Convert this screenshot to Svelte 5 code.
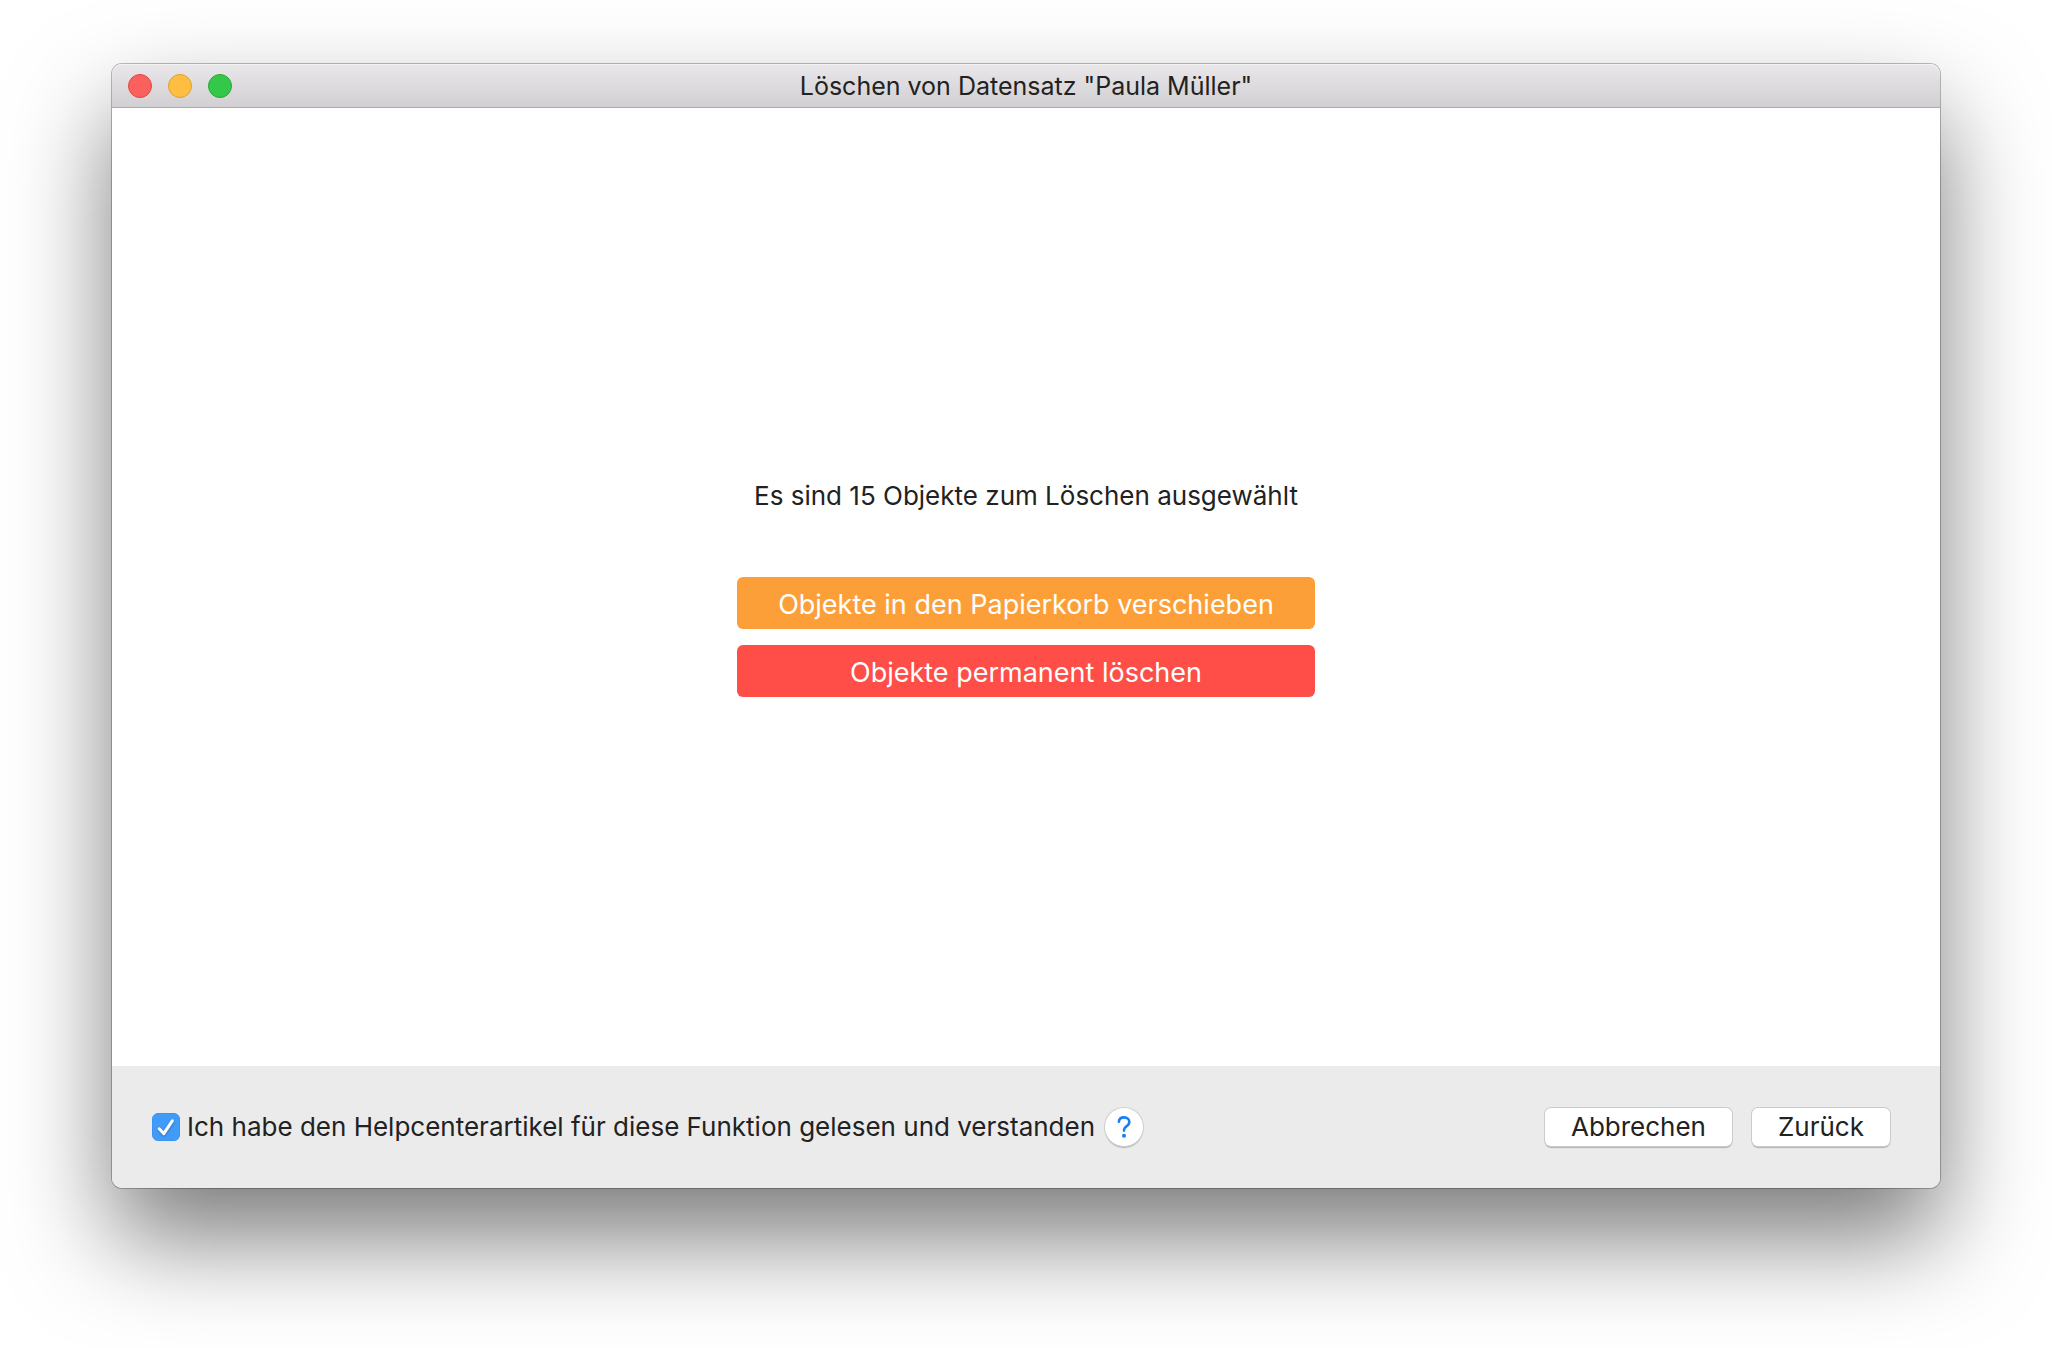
<script>
  let read = $state(true);

  const actions = [
    { label: 'Objekte in den Papierkorb verschieben', kind: 'trash' },
    { label: 'Objekte permanent löschen', kind: 'remove' }
  ];
</script>

<div class="desktop">
  <main class="window">
    <header>
      <div class="lights">
        <button class="light close" aria-label="Schließen"></button>
        <button class="light minimize" aria-label="Minimieren"></button>
        <button class="light zoom" aria-label="Vergrößern"></button>
      </div>
      <h1>Löschen von Datensatz "Paula Müller"</h1>
    </header>

    <section class="content">
      <p>Es sind 15 Objekte zum Löschen ausgewählt</p>
      <div class="actions">
        {#each actions as action}
          <button class="action {action.kind}">{action.label}</button>
        {/each}
      </div>
    </section>

    <footer>
      <label>
        <span class="check">
          <input type="checkbox" bind:checked={read}>
          {#if read}
            <svg width="28" height="28" viewBox="0 0 28 28" fill="none" aria-hidden="true">
              <path d="M7.2 15.8L11.8 20.6L20.3 7.8" stroke="white" stroke-width="3" stroke-linecap="round" stroke-linejoin="round"/>
            </svg>
          {/if}
        </span>
        Ich habe den Helpcenterartikel für diese Funktion gelesen und verstanden
      </label>
      <button class="help" aria-label="Hilfe">
        <svg width="38" height="38" viewBox="0 0 38 38" fill="none" aria-hidden="true">
          <path d="M13.9 13.8C14 11.1 16 9.4 19.1 9.4C22.2 9.4 24.3 11.2 24.3 13.9C24.3 15.9 23.2 17.2 21.4 18.3C19.7 19.4 19 20.3 19 21.8V22.6" stroke="#157efb" stroke-width="2.6" stroke-linecap="round"/>
          <circle cx="19" cy="27.8" r="2" fill="#157efb"/>
        </svg>
      </button>
      <div class="nav">
        <button class="push">Abbrechen</button>
        <button class="push">Zurück</button>
      </div>
    </footer>
  </main>
</div>

<style>
  :global(body){
    margin: 0;
    background: white;
  }
  .desktop{
    box-sizing: border-box;
    display: flex;
    min-height: 100vh;
    padding: 64px 112px 160px;
    overflow: hidden;
    font-family: Inter, "Liberation Sans", sans-serif;
    font-size: 26px;
    line-height: 30px;
    color: #222;
  }
  button{
    padding: 0;
    border: 0;
    font: inherit;
    color: inherit;
  }
  .window{
    flex: 1;
    display: flex;
    flex-direction: column;
    border-radius: 10px;
    background: white;
    box-shadow: 0 0 0 1px rgba(0,0,0,.26), 0 50px 100px rgba(0,0,0,.52);
  }

  header{
    box-sizing: border-box;
    height: 44px;
    display: grid;
    grid-template-columns: 1fr auto 1fr;
    align-items: center;
    padding: 0 16px;
    border-bottom: 1px solid #aeabae;
    border-radius: 10px 10px 0 0;
    background: linear-gradient(#e9e7ea, #d1cfd2);
    box-shadow: inset 0 1px 0 #f5f4f5;
  }
  .lights{
    display: flex;
    gap: 16px;
  }
  .light{
    width: 24px;
    height: 24px;
    border: 1px solid;
    border-radius: 50%;
  }
  .close{
    background: #fc605c;
    border-color: #df4744;
  }
  .minimize{
    background: #fdbe41;
    border-color: #de9f34;
  }
  .zoom{
    background: #34c84a;
    border-color: #27a934;
  }
  h1{
    margin: 0;
    font-size: 25px;
    font-weight: 400;
  }

  .content{
    flex: 1;
    display: flex;
    flex-direction: column;
    align-items: center;
    justify-content: center;
    gap: 66px;
    padding-top: 4px;
  }
  p{
    margin: 0;
  }
  .actions{
    display: flex;
    flex-direction: column;
    gap: 16px;
    width: 578px;
  }
  .action{
    height: 52px;
    padding-top: 4px;
    border-radius: 6px;
    font-size: 27px;
    color: white;
  }
  .trash{
    background: #fd9f38;
  }
  .remove{
    background: #ff4e48;
  }

  footer{
    box-sizing: border-box;
    min-height: 122px;
    display: flex;
    align-items: center;
    padding: 0 50px 0 40px;
    border-radius: 0 0 10px 10px;
    background: #ebebeb;
  }
  label{
    display: flex;
    align-items: center;
    gap: 7px;
  }
  .check{
    display: grid;
  }
  .check > *{
    grid-area: 1 / 1;
  }
  .check svg{
    pointer-events: none;
    filter: drop-shadow(0 1px 1px rgba(0,0,0,.3));
  }
  input{
    appearance: none;
    width: 28px;
    height: 28px;
    margin: 0;
    border: 1px solid #b5b5b5;
    border-radius: 6px;
    background: white;
  }
  input:checked{
    background: #419bf9;
    border-color: #3b93f4;
  }
  .help{
    display: flex;
    margin-left: 10px;
    border-radius: 50%;
    background: white;
    box-shadow: 0 0 0 1px #cfcfcf, 0 2px 1px rgba(0,0,0,.25);
  }
  .nav{
    display: flex;
    gap: 20px;
    margin-left: auto;
  }
  .push{
    height: 38px;
    padding: 0 26px;
    border-radius: 6px;
    background: white;
    box-shadow: 0 0 0 1px #cbcbcb, 0 2px 1px rgba(0,0,0,.25);
  }
</style>
